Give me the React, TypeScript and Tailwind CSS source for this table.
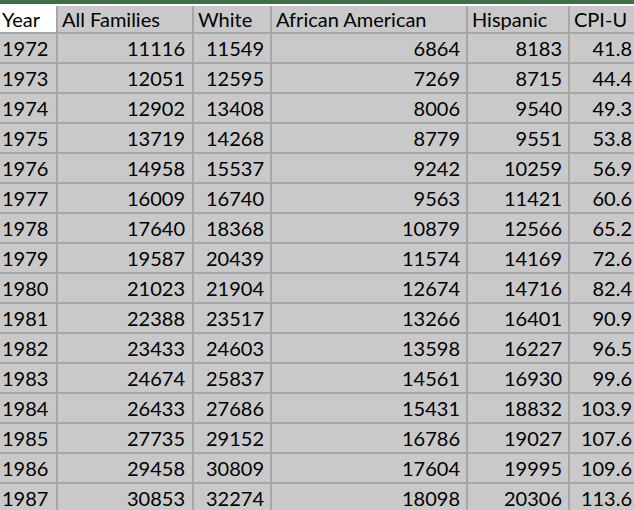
import React from 'react';

const rows: [number, number, number, number, number, string][] = [
  [1972, 11116, 11549, 6864, 8183, '41.8'],
  [1973, 12051, 12595, 7269, 8715, '44.4'],
  [1974, 12902, 13408, 8006, 9540, '49.3'],
  [1975, 13719, 14268, 8779, 9551, '53.8'],
  [1976, 14958, 15537, 9242, 10259, '56.9'],
  [1977, 16009, 16740, 9563, 11421, '60.6'],
  [1978, 17640, 18368, 10879, 12566, '65.2'],
  [1979, 19587, 20439, 11574, 14169, '72.6'],
  [1980, 21023, 21904, 12674, 14716, '82.4'],
  [1981, 22388, 23517, 13266, 16401, '90.9'],
  [1982, 23433, 24603, 13598, 16227, '96.5'],
  [1983, 24674, 25837, 14561, 16930, '99.6'],
  [1984, 26433, 27686, 15431, 18832, '103.9'],
  [1985, 27735, 29152, 16786, 19027, '107.6'],
  [1986, 29458, 30809, 17604, 19995, '109.6'],
  [1987, 30853, 32274, 18098, 20306, '113.6'],
];

const headers = ['All Families', 'White', 'African American', 'Hispanic', 'CPI-U'];

const App: React.FC = () => {
  return (
    <div
      className="w-[634px] h-[510px] overflow-hidden bg-white text-black"
      style={{ fontFamily: 'Lato, sans-serif' }}
    >
      <div className="h-[4px] bg-[#3f6f47]" />
      <div className="mt-[2px] grid grid-cols-[56px_134px_76px_194px_100px_64px] gap-[2px] bg-[#a6a6a6] text-[20px] leading-none">
        {/* header */}
        <div className="h-[26px] bg-white pl-[2px] flex items-center">Year</div>
        {headers.map((h) => (
          <div key={h} className="h-[26px] bg-[#c9c9c9] pl-[4px] flex items-center whitespace-nowrap">
            {h}
          </div>
        ))}
        {rows.map((r) => (
          <React.Fragment key={r[0]}>
            <div className="h-[28px] bg-[#c9c9c9] pl-[2px] flex items-center">{r[0]}</div>
            <div className="h-[28px] bg-[#c9c9c9] pr-[7px] flex items-center justify-end">{r[1]}</div>
            <div className="h-[28px] bg-[#c9c9c9] pr-[6px] flex items-center justify-end">{r[2]}</div>
            <div className="h-[28px] bg-[#c9c9c9] pr-[6px] flex items-center justify-end">{r[3]}</div>
            <div className="h-[28px] bg-[#c9c9c9] pr-[6px] flex items-center justify-end">{r[4]}</div>
            <div className="h-[28px] bg-[#c9c9c9] pr-[2px] flex items-center justify-end">{r[5]}</div>
          </React.Fragment>
        ))}
      </div>
    </div>
  );
};

export default App;
